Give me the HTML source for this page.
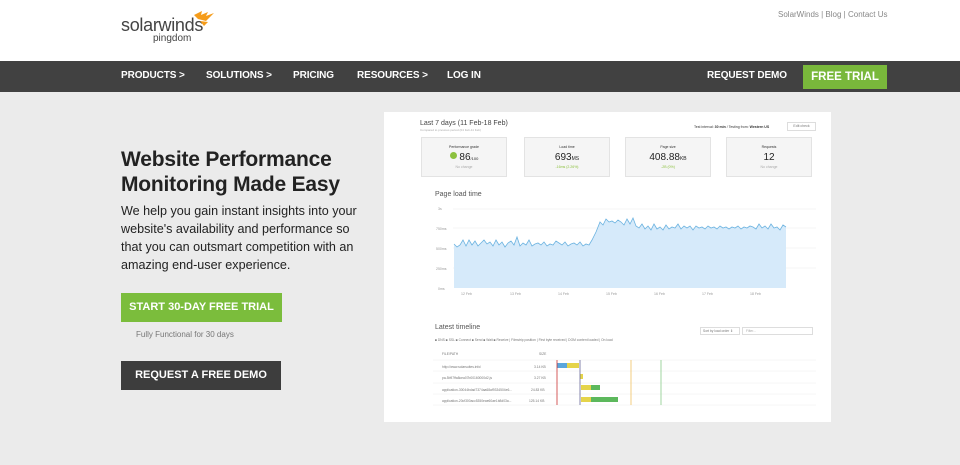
<!DOCTYPE html>
<html><head><meta charset="utf-8"><style>
*{margin:0;padding:0;box-sizing:border-box}
body{width:960px;height:465px;overflow:hidden;background:#ebebeb;font-family:"Liberation Sans",sans-serif;position:relative}
.hdr{position:absolute;left:0;top:0;width:960px;height:61px;background:#fff}
.nav{position:absolute;left:0;top:61px;width:960px;height:31px;background:#414141}
.nav span{position:absolute;top:9px;color:#fff;font-weight:bold;font-size:10px;letter-spacing:-.1px}
.ft{position:absolute;left:803px;top:65px;width:84px;height:24px;background:#79b83b;color:#fff;font-weight:bold;font-size:11.5px;text-align:center;line-height:24px}
.top{position:absolute;left:778px;top:10px;font-size:8px;color:#888}
h1{position:absolute;left:121px;top:147px;font-size:21px;line-height:25px;color:#222;font-weight:bold;letter-spacing:-.2px}
p.d{position:absolute;left:121px;top:202px;width:250px;font-size:12.6px;line-height:18px;color:#222}
.b1{position:absolute;left:121px;top:293px;width:161px;height:29px;background:#7bbd3c;color:#fff;font-weight:bold;font-size:11px;text-align:center;line-height:29px}
.ff{position:absolute;left:136px;top:330px;font-size:8px;color:#777}
.b2{position:absolute;left:121px;top:361px;width:160px;height:29px;background:#3d3d3d;color:#fff;font-weight:bold;font-size:11px;text-align:center;line-height:29px}
.panel{position:absolute;left:384px;top:112px;width:447px;height:310px;background:#fff}
.s{position:absolute;font-size:4px;color:#777;white-space:nowrap}
.card{position:absolute;top:25px;width:86px;height:40px;background:#f5f5f5;border:1px solid #e3e3e3;text-align:center}
.card i{display:block;font-style:normal;font-size:3.5px;color:#333;margin-top:7px}
.card b{display:block;font-weight:normal;font-size:10px;color:#222;margin-top:3px}
.card u{display:block;text-decoration:none;font-size:3.5px;color:#aaa;margin-top:2px}
</style></head><body>
<div class="hdr">
<div style="position:absolute;left:121px;top:15px;font-size:18px;color:#444;letter-spacing:-.3px">solarwinds</div>
<div style="position:absolute;left:153px;top:33px;font-size:10px;color:#444">pingdom</div>
<svg style="position:absolute;left:192px;top:9px" width="24" height="20"><path d="M2 6 L10 2 L9 6 L16 3 L14 7 L22 4 L14 12 L6 10 Z" fill="#f59c1a"/><path d="M8 12 L16 13 L12 17 Z" fill="#f59c1a"/></svg>
<div class="top">SolarWinds | Blog | Contact Us</div>
</div>
<div class="nav">
<span style="left:121px">PRODUCTS &gt;</span>
<span style="left:206px">SOLUTIONS &gt;</span>
<span style="left:293px">PRICING</span>
<span style="left:357px">RESOURCES &gt;</span>
<span style="left:447px">LOG IN</span>
<span style="left:707px">REQUEST DEMO</span>
</div>
<div class="ft">FREE TRIAL</div>
<h1>Website Performance<br>Monitoring Made Easy</h1>
<p class="d">We help you gain instant insights into your website's availability and performance so that you can outsmart competition with an amazing end-user experience.</p>
<div class="b1">START 30-DAY FREE TRIAL</div>
<div class="ff">Fully Functional for 30 days</div>
<div class="b2">REQUEST A FREE DEMO</div>
<div class="panel">
<div class="s" style="left:36px;top:8px;font-size:7px;color:#444">Last 7 days (11 Feb-18 Feb)</div>
<div class="s" style="left:36px;top:16px;font-size:3px;color:#aaa">Compared to previous period (04 Feb-11 Feb)</div>
<div class="s" style="left:310px;top:13px;font-size:3.5px;color:#333">Test interval: <b>30 min</b> / Testing from: <b>Western US</b></div>
<div class="s" style="left:403px;top:10px;width:29px;height:9px;border:1px solid #ddd;font-size:3.5px;line-height:7px;text-align:center">Edit check</div>
<div class="card" style="left:37px"><i>Performance grade</i><b><span style="display:inline-block;width:7px;height:7px;border-radius:50%;background:#8cc13f;vertical-align:1px"></span> 86<small style="font-size:4px">/100</small></b><u>No change</u></div>
<div class="card" style="left:140px"><i>Load time</i><b>693<small style="font-size:5px">MS</small></b><u style="color:#8cc13f">-16ms (2.26%)</u></div>
<div class="card" style="left:241px"><i>Page size</i><b>408.88<small style="font-size:5px">KB</small></b><u style="color:#8cc13f">-2B (0%)</u></div>
<div class="card" style="left:342px"><i>Requests</i><b>12</b><u>No change</u></div>
<div class="s" style="left:51px;top:79px;font-size:7px;color:#555">Page load time</div>
<div class="s" style="left:51px;top:212px;font-size:7px;color:#555">Latest timeline</div>
<div class="s" style="left:316px;top:215px;width:40px;height:8px;border:1px solid #ddd;font-size:3.3px;line-height:6px;padding-left:2px">Sort by load order ⇕</div>
<div class="s" style="left:358px;top:215px;width:71px;height:8px;border:1px solid #ddd;font-size:3.3px;line-height:6px;padding-left:3px;color:#aaa">Filter...</div>
<div class="s" style="left:51px;top:226px;font-size:3.3px">■ DNS ■ SSL ■ Connect ■ Send ■ Wait ■ Receive | Filmstrip position | First byte received | DOM content loaded | On load</div>
<div class="s" style="left:58px;top:240px;font-size:3.3px">FILE/PATH</div><div class="s" style="left:155px;top:240px;font-size:3.3px">SIZE</div>
<div class="s" style="left:58px;top:253px;font-size:3.3px">http://www.solarsuites.info/</div><div class="s" style="left:150px;top:253px;font-size:3.3px">3.14 KB</div>
<div class="s" style="left:58px;top:264px;font-size:3.3px">pa-5b97ffa8cea07b00160000d2.js</div><div class="s" style="left:150px;top:264px;font-size:3.3px">3.27 KB</div>
<div class="s" style="left:58px;top:276px;font-size:3.3px">application-30044bdad7374aa68af9334504e6...</div><div class="s" style="left:147px;top:276px;font-size:3.3px">24.83 KB</div>
<div class="s" style="left:58px;top:287px;font-size:3.3px">application-20cf300acc5350eae60ae1b8d03a...</div><div class="s" style="left:145px;top:287px;font-size:3.3px">125.14 KB</div>
</div>
<svg style="position:absolute;left:0;top:0" width="960" height="465">
<g stroke="#eee" stroke-width="0.6"><line x1="453" y1="209" x2="816" y2="209"/><line x1="453" y1="228" x2="816" y2="228"/><line x1="453" y1="248" x2="816" y2="248"/><line x1="453" y1="268" x2="816" y2="268"/></g>
<polygon fill="#d6eafa" points="454,288 454,244 457,247 460,245 463,240 466,246 469,240 472,245 475,241 478,246 481,243 484,240 487,244 490,242 493,246 496,240 499,245 502,242 505,247 508,243 511,241 514,245 517,237 520,246 523,243 526,245 529,240 532,246 535,244 538,243 541,245 544,242 547,246 550,244 553,245 556,241 559,243 562,245 565,242 568,246 571,244 574,243 577,245 580,242 583,246 586,244 589,245 592,240 596,232 600,222 603,225 606,219 609,222 612,221 615,223 618,220 621,222 624,225 627,219 630,224 633,218 636,226 639,228 642,224 645,229 648,226 651,230 654,224 657,229 660,227 663,230 666,225 669,229 672,227 675,228 678,224 681,229 684,226 687,228 690,226 693,230 696,226 699,228 702,227 705,229 708,226 711,228 714,227 717,229 720,226 723,228 726,227 729,229 732,227 735,228 738,226 741,229 744,227 747,228 750,226 753,227 756,229 759,224 762,228 765,226 768,229 771,224 774,228 777,227 780,230 783,225 786,227 786,288"/>
<polyline fill="none" stroke="#6cb3e0" stroke-width="0.8" points="454,244 457,247 460,245 463,240 466,246 469,240 472,245 475,241 478,246 481,243 484,240 487,244 490,242 493,246 496,240 499,245 502,242 505,247 508,243 511,241 514,245 517,237 520,246 523,243 526,245 529,240 532,246 535,244 538,243 541,245 544,242 547,246 550,244 553,245 556,241 559,243 562,245 565,242 568,246 571,244 574,243 577,245 580,242 583,246 586,244 589,245 592,240 596,232 600,222 603,225 606,219 609,222 612,221 615,223 618,220 621,222 624,225 627,219 630,224 633,218 636,226 639,228 642,224 645,229 648,226 651,230 654,224 657,229 660,227 663,230 666,225 669,229 672,227 675,228 678,224 681,229 684,226 687,228 690,226 693,230 696,226 699,228 702,227 705,229 708,226 711,228 714,227 717,229 720,226 723,228 726,227 729,229 732,227 735,228 738,226 741,229 744,227 747,228 750,226 753,227 756,229 759,224 762,228 765,226 768,229 771,224 774,228 777,227 780,230 783,225 786,227"/>
<g font-size="3.5" fill="#999" font-family="Liberation Sans"><text x="438" y="210">3s</text><text x="436" y="230">750ms</text><text x="436" y="250">500ms</text><text x="436" y="270">250ms</text><text x="438" y="290">0ms</text>
<text x="461" y="295">12 Feb</text><text x="510" y="295">13 Feb</text><text x="558" y="295">14 Feb</text><text x="606" y="295">15 Feb</text><text x="654" y="295">16 Feb</text><text x="702" y="295">17 Feb</text><text x="750" y="295">18 Feb</text></g>
<g stroke="#eee" stroke-width="0.5"><line x1="433" y1="360" x2="816" y2="360"/><line x1="433" y1="371" x2="816" y2="371"/><line x1="433" y1="383" x2="816" y2="383"/><line x1="433" y1="394" x2="816" y2="394"/><line x1="433" y1="405" x2="816" y2="405"/></g>
<rect x="557" y="363" width="10" height="5" fill="#5aa6dc"/><rect x="567" y="363" width="12" height="5" fill="#e5d44a"/>
<rect x="580" y="374" width="3" height="5" fill="#e5d44a"/>
<rect x="581" y="385" width="10" height="5" fill="#e5d44a"/><rect x="591" y="385" width="9" height="5" fill="#5cb85c"/>
<rect x="581" y="397" width="10" height="5" fill="#e5d44a"/><rect x="591" y="397" width="27" height="5" fill="#5cb85c"/>
<line x1="557" y1="360" x2="557" y2="405" stroke="#c33" stroke-width="0.8"/>
<line x1="580" y1="360" x2="580" y2="405" stroke="#669" stroke-width="0.8"/>
<line x1="631" y1="360" x2="631" y2="405" stroke="#f0c060" stroke-width="0.8"/>
<line x1="661" y1="360" x2="661" y2="405" stroke="#8c8" stroke-width="0.8"/>
</svg>
</body></html>
